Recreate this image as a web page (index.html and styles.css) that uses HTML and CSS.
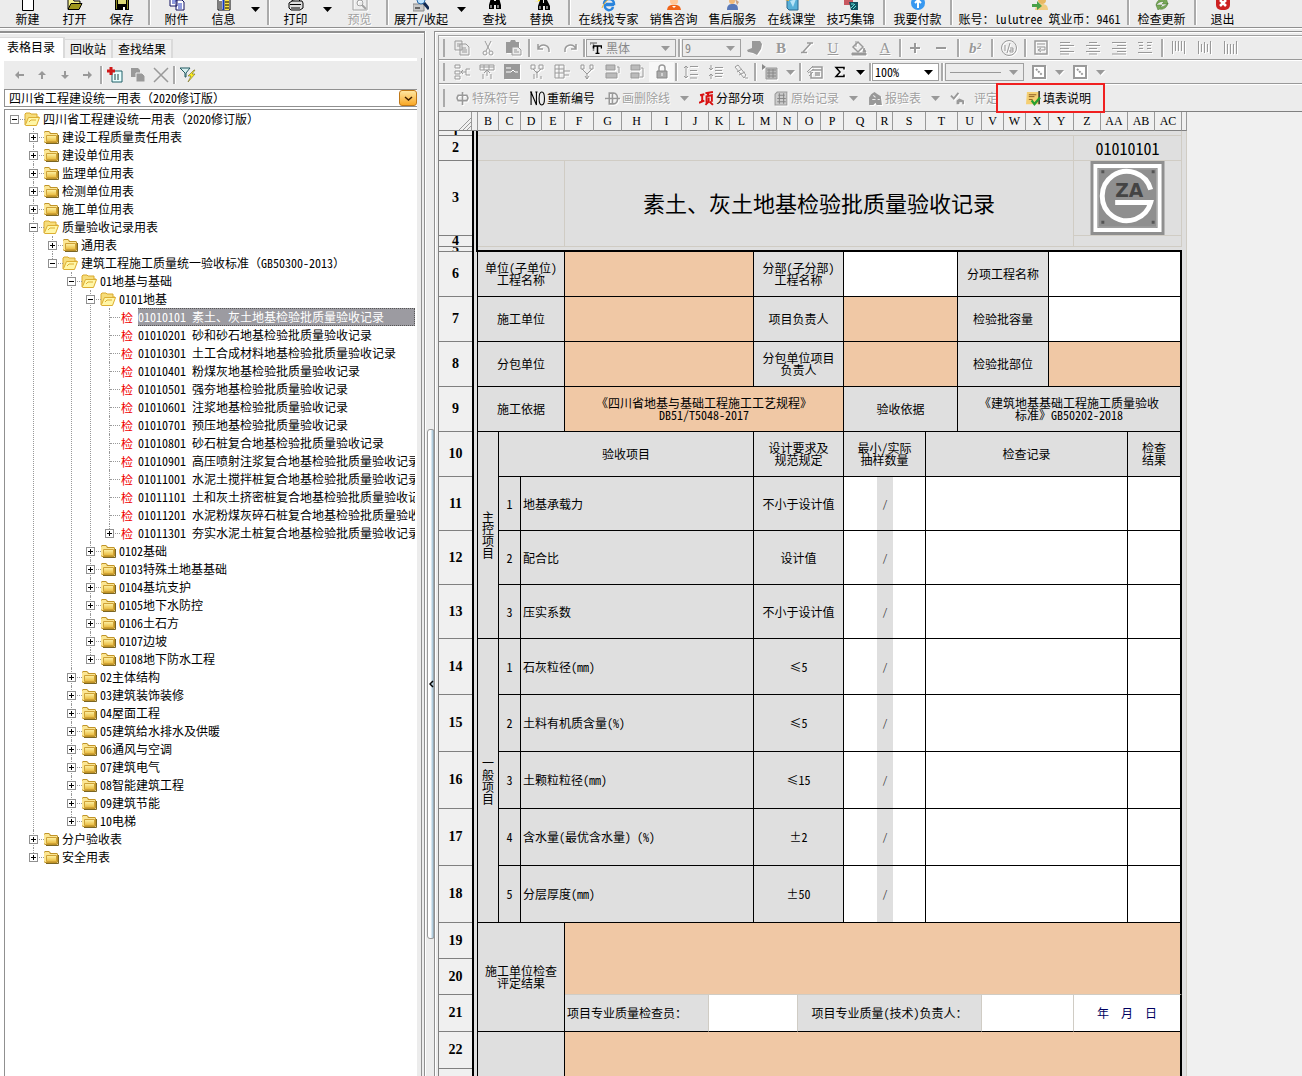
FILE: index.html
```html
<!DOCTYPE html>
<html lang="zh-CN">
<head>
<meta charset="utf-8">
<title>四川省工程建设统一用表</title>
<link rel="stylesheet" href="styles.css">
</head>
<body>
<svg class="defs" aria-hidden="true">
  <linearGradient id="gold" x1="0" y1="0" x2="0" y2="1"><stop offset="0" stop-color="#fff3a8"/><stop offset="1" stop-color="#e8b93a"/></linearGradient>
  <symbol id="closed" viewBox="0 0 16 16"><path d="M1 13V3l1-1h4l2 2h6l1 1v8l-1 1H2z" fill="#c09428"/><path d="M1 12V4l1-1h4l1 2h7v7l-1 1H2z" fill="#fbe694"/><path d="M3.500 6.500h10v6h-10z" fill="url(#gold)" stroke="#cfa236"/><path d="M3 14.500h12.500V6" fill="none" stroke="#7a6524"/></symbol>
  <symbol id="open" viewBox="0 0 16 16"><path d="M1 14V3l1-1h4l1 1h6v3h2l-3 8z" fill="#f6dd7c" stroke="#d9a92c"/><path d="M1.500 13.500l3-7h11l-3 8H2z" fill="#fff6a6" stroke="#dcae33"/><path d="M5 11l2-2h5" fill="none" stroke="#dcae33"/></symbol>
  <symbol id="tri" viewBox="0 0 9 5"><path d="M0 0h9L4.500 5z"/></symbol>
</svg>

<header class="main-bar">
  <button class="mb"><svg viewBox="0 0 16 16"><path d="M2.500 0v14.500h11V0z" fill="#fff" stroke="#000"/></svg>新建</button>
  <button class="mb"><svg viewBox="0 0 16 16"><path d="M1 13V3h5l1 2h6v2" fill="#f7f38e" stroke="#000"/><path d="M1 13.500l3-6h11l-3 6z" fill="#a0981c" stroke="#000"/></svg>打开</button>
  <button class="mb"><svg viewBox="0 0 16 16"><path d="M1 1h14v13H1z" fill="#000"/><path d="M2 2h1v11H2zM13 2h1v11h-1z" fill="#8a8620"/><path d="M4 2h8v6H4z" fill="#dcd978"/><path d="M9 11h2v3H9z" fill="#fff"/></svg>保存</button>
  <span class="sep"></span>
  <button class="mb"><svg viewBox="0 0 16 16"><path d="M1 0h7v10H1zM7 4h6l2 2v8H7z" fill="#fff" stroke="#101060"/><path d="M3 5h4M3 7h3M9 8h4M9 10h4M9 12h4" stroke="#2038c0"/></svg>附件</button>
  <button class="mb"><svg viewBox="0 0 16 16"><path d="M2 2h12v12H2z" fill="#fff" stroke="#000"/><path d="M8 2h5v12H8z" fill="#ffe640"/><path d="M3 6h3M3 8h3M3 10h3M3 12h3M9 6h4M9 9h4M9 12h4" stroke="#000"/><path d="M7.500 2v12" stroke="#1038c8" stroke-width="2"/></svg>信息</button>
  <button class="drop" aria-label="更多信息"><svg><use href="#tri"/></svg></button>
  <span class="sep"></span>
  <button class="mb"><svg viewBox="0 0 16 16"><path d="M4 5l2-5h7l-2 6z" fill="#fff" stroke="#000"/><path d="M1 7l3-2h10l1 2v5l-3 2H3l-2-2z" fill="#ddd" stroke="#000"/><path d="M2 8.500h11M3 12h9" stroke="#000"/></svg>打印</button>
  <button class="drop" aria-label="打印选项"><svg><use href="#tri"/></svg></button>
  <button class="mb off"><svg viewBox="0 0 16 16"><path d="M1 0v14h14V0" fill="none" stroke="#a0a0a0"/><circle cx="8" cy="7" r="3" fill="none" stroke="#a0a0a0"/><path d="M10 9l4 4" stroke="#a0a0a0" stroke-width="2"/></svg>预览</button>
  <span class="sep"></span>
  <button class="mb w60"><svg viewBox="0 0 16 16"><path d="M0 8h11v7H0z" fill="#c8c8c8" stroke="#888"/><path d="M2 12h5" stroke="#000"/><circle cx="8" cy="4" r="4" fill="#bfe4ff" stroke="#2868a8"/><path d="M11 7l5 6" stroke="#102850" stroke-width="3"/></svg>展开/收起</button>
  <button class="drop w20" aria-label="展开选项"><svg><use href="#tri"/></svg></button>
  <button class="mb"><svg viewBox="0 0 16 16"><path d="M4 2h3v3h2V2h3l2 7v4H9V9H7v4H2V9z" fill="#000"/><path d="M4 9v3M11 9v3" stroke="#fff"/></svg>查找</button>
  <button class="mb"><svg viewBox="0 0 16 16"><path d="M6 4h3v3h1V4h3l3 6v4h-5v-4h-2v4H4v-4z" fill="#000"/><path d="M0 6l4-1 1-4 1 4" fill="#ffe800"/><path d="M6 10v3M13 10v3" stroke="#fff"/></svg>替换</button>
  <span class="sep"></span>
  <button class="mb w71"><svg viewBox="0 0 16 16"><path d="M13 9H4a4 4 0 0 0 8 2M3 8a5 5 0 0 1 10 0H5" fill="none" stroke="#2a84dc" stroke-width="2.500"/><path d="M1 12C4 4 10 1 15 2" fill="none" stroke="#f2b632"/></svg>在线找专家</button>
  <button class="mb w59"><svg viewBox="0 0 16 16"><circle cx="8" cy="5" r="4" fill="#ffc89a"/><path d="M1 14c1-5 3-5 7-5s6 0 7 5z" fill="#f06418"/><path d="M6 10l2 2 2-2" fill="#fff"/></svg>销售咨询</button>
  <button class="mb w59"><svg viewBox="0 0 16 16"><circle cx="7" cy="5" r="3" fill="#f0b878"/><path d="M2 14c0-5 2-6 6-6s5 2 5 6z" fill="#5878b8"/><path d="M10 3l4 3-2 3z" fill="#c8a080"/></svg>售后服务</button>
  <button class="mb w59"><svg viewBox="0 0 16 16"><path d="M3 2l9-1 2 2v11H5l-2-2z" fill="#58b0d8" stroke="#286890"/><path d="M5 4v9M6 5l3 6 3-8" fill="#b8e4f8"/><path d="M1 4l4-2v3z" fill="#f0b030"/></svg>在线课堂</button>
  <button class="mb w59"><svg viewBox="0 0 16 16"><path d="M1 2h9v7H1z" fill="#c85860"/><path d="M6 6h9v8H8z" fill="#145060"/><path d="M8 12l4-4M10 13l3-3M8 8h3" stroke="#60e0d8"/></svg>技巧集锦</button>
  <span class="sep"></span>
  <button class="mb w59"><svg viewBox="0 0 16 16"><circle cx="8" cy="7" r="7" fill="#3898f0"/><path d="M8 12V4M5 7l3-3 3 3" fill="none" stroke="#fff" stroke-width="2"/></svg>我要付款</button>
  <span class="sep"></span>
  <div class="mb account"><svg viewBox="0 0 16 16"><circle cx="10" cy="4" r="4" fill="#e8b860"/><path d="M3 14c1-5 3-6 7-6s6 2 6 6z" fill="#f0cc80"/><path d="M0 8h5V5l5 5-5 4v-3H0z" fill="#48a048"/></svg><span>账号：lulutree 筑业币：9461</span></div>
  <span class="sep"></span>
  <button class="mb w59"><svg viewBox="0 0 16 16"><path d="M2 9c1-5 5-7 9-5l1-2 2 6-6 0 2-2c-3-1-5 0-8 3zM14 7c-1 5-5 7-9 6l-1 1-2-5h6l-2 2c3 0 5-1 8-4z" fill="#78a858" stroke="#487830" stroke-width=".5"/></svg>检查更新</button>
  <span class="sep"></span>
  <button class="mb"><svg viewBox="0 0 16 16"><rect x="1" width="14" height="14" rx="5" fill="#cc2020"/><path d="M5 4l6 6M11 4l-6 6" stroke="#fff" stroke-width="2.500"/></svg>退出</button>
</header>

<main class="work">
<aside class="side">
  <nav class="tabs">
    <button class="tab on">表格目录</button><button class="tab">回收站</button><button class="tab">查找结果</button>
  </nav>
  <div class="side-body">
    <div class="side-tools">
      <button aria-label="后退"><svg viewBox="0 0 16 16"><path d="M4 8l4-4v3h5v2H8v3z" fill="#999"/></svg></button>
      <button aria-label="上移"><svg viewBox="0 0 16 16"><path d="M8 4l4 4H9v4H7V8H4z" fill="#999"/></svg></button>
      <button aria-label="下移"><svg viewBox="0 0 16 16"><path d="M8 12l4-4H9V4H7v4H4z" fill="#999"/></svg></button>
      <button aria-label="前进"><svg viewBox="0 0 16 16"><path d="M12 8L8 4v3H3v2h5v3z" fill="#999"/></svg></button>
      <span class="sep thin"></span>
      <button aria-label="添加"><svg viewBox="0 0 16 16"><path d="M5 4h10v11H5z" fill="#e8ffff" stroke="#206068"/><path d="M7 8h6M7 10h6M7 12h6" stroke="#204040" stroke-dasharray="2 1"/><path d="M4 0v8M0 4h8" stroke="#d01818" stroke-width="3"/></svg></button>
      <button aria-label="复制"><svg viewBox="0 0 16 16"><path d="M1 1h7l2 2v7H1z" fill="#999"/><path d="M6 6h6l3 3v6H6z" fill="#999" stroke="#ececec"/></svg></button>
      <button aria-label="删除"><svg viewBox="0 0 16 16"><path d="M1 1l14 14M15 1L1 15" stroke="#999" stroke-width="1.500"/></svg></button>
      <span class="sep thin"></span>
      <button aria-label="筛选"><svg viewBox="0 0 16 16"><path d="M0 1h10L6 6v4H5V6z" fill="#d8f0f0" stroke="#205860"/><path d="M14 3l-6 6h3l-3 6 7-8h-3l3-4z" fill="#fff020" stroke="#706820" stroke-width=".6"/></svg></button>
    </div>
    <div class="combo">
      <select aria-label="模板"><option>四川省工程建设统一用表（2020修订版）</option></select>
      <button aria-label="展开列表"><svg viewBox="0 0 9 5"><path d="M1 1l3.500 3L8 1" fill="none" stroke="#402000" stroke-width="1.500"/></svg></button>
    </div>
    <ul class="tree">
      <li><div class="row"><button class="ex"></button><svg><use href="#open"/></svg><span>四川省工程建设统一用表（2020修订版）</span></div>
      <ul>
        <li><div class="row"><button class="ex plus"></button><svg><use href="#closed"/></svg><span>建设工程质量责任用表</span></div></li>
        <li><div class="row"><button class="ex plus"></button><svg><use href="#closed"/></svg><span>建设单位用表</span></div></li>
        <li><div class="row"><button class="ex plus"></button><svg><use href="#closed"/></svg><span>监理单位用表</span></div></li>
        <li><div class="row"><button class="ex plus"></button><svg><use href="#closed"/></svg><span>检测单位用表</span></div></li>
        <li><div class="row"><button class="ex plus"></button><svg><use href="#closed"/></svg><span>施工单位用表</span></div></li>
        <li><div class="row"><button class="ex"></button><svg><use href="#open"/></svg><span>质量验收记录用表</span></div>
        <ul>
          <li><div class="row"><button class="ex plus"></button><svg><use href="#closed"/></svg><span>通用表</span></div></li>
          <li><div class="row"><button class="ex"></button><svg><use href="#open"/></svg><span>建筑工程施工质量统一验收标准（GB50300-2013）</span></div>
          <ul>
            <li><div class="row"><button class="ex"></button><svg><use href="#open"/></svg><span>01地基与基础</span></div>
            <ul>
              <li><div class="row"><button class="ex"></button><svg><use href="#open"/></svg><span>0101地基</span></div>
              <ul>
                <li><div class="row sel"><i></i><b>检</b><span>01010101 素土、灰土地基检验批质量验收记录</span></div></li>
                <li><div class="row"><i></i><b>检</b><span>01010201 砂和砂石地基检验批质量验收记录</span></div></li>
                <li><div class="row"><i></i><b>检</b><span>01010301 土工合成材料地基检验批质量验收记录</span></div></li>
                <li><div class="row"><i></i><b>检</b><span>01010401 粉煤灰地基检验批质量验收记录</span></div></li>
                <li><div class="row"><i></i><b>检</b><span>01010501 强夯地基检验批质量验收记录</span></div></li>
                <li><div class="row"><i></i><b>检</b><span>01010601 注浆地基检验批质量验收记录</span></div></li>
                <li><div class="row"><i></i><b>检</b><span>01010701 预压地基检验批质量验收记录</span></div></li>
                <li><div class="row"><i></i><b>检</b><span>01010801 砂石桩复合地基检验批质量验收记录</span></div></li>
                <li><div class="row"><i></i><b>检</b><span>01010901 高压喷射注浆复合地基检验批质量验收记录</span></div></li>
                <li><div class="row"><i></i><b>检</b><span>01011001 水泥土搅拌桩复合地基检验批质量验收记录</span></div></li>
                <li><div class="row"><i></i><b>检</b><span>01011101 土和灰土挤密桩复合地基检验批质量验收记录</span></div></li>
                <li><div class="row"><i></i><b>检</b><span>01011201 水泥粉煤灰碎石桩复合地基检验批质量验收记录</span></div></li>
                <li><div class="row"><button class="ex plus"></button><b>检</b><span>01011301 夯实水泥土桩复合地基检验批质量验收记录</span></div></li>
              </ul></li>
              <li><div class="row"><button class="ex plus"></button><svg><use href="#closed"/></svg><span>0102基础</span></div></li>
              <li><div class="row"><button class="ex plus"></button><svg><use href="#closed"/></svg><span>0103特殊土地基基础</span></div></li>
              <li><div class="row"><button class="ex plus"></button><svg><use href="#closed"/></svg><span>0104基坑支护</span></div></li>
              <li><div class="row"><button class="ex plus"></button><svg><use href="#closed"/></svg><span>0105地下水防控</span></div></li>
              <li><div class="row"><button class="ex plus"></button><svg><use href="#closed"/></svg><span>0106土石方</span></div></li>
              <li><div class="row"><button class="ex plus"></button><svg><use href="#closed"/></svg><span>0107边坡</span></div></li>
              <li><div class="row"><button class="ex plus"></button><svg><use href="#closed"/></svg><span>0108地下防水工程</span></div></li>
            </ul></li>
            <li><div class="row"><button class="ex plus"></button><svg><use href="#closed"/></svg><span>02主体结构</span></div></li>
            <li><div class="row"><button class="ex plus"></button><svg><use href="#closed"/></svg><span>03建筑装饰装修</span></div></li>
            <li><div class="row"><button class="ex plus"></button><svg><use href="#closed"/></svg><span>04屋面工程</span></div></li>
            <li><div class="row"><button class="ex plus"></button><svg><use href="#closed"/></svg><span>05建筑给水排水及供暖</span></div></li>
            <li><div class="row"><button class="ex plus"></button><svg><use href="#closed"/></svg><span>06通风与空调</span></div></li>
            <li><div class="row"><button class="ex plus"></button><svg><use href="#closed"/></svg><span>07建筑电气</span></div></li>
            <li><div class="row"><button class="ex plus"></button><svg><use href="#closed"/></svg><span>08智能建筑工程</span></div></li>
            <li><div class="row"><button class="ex plus"></button><svg><use href="#closed"/></svg><span>09建筑节能</span></div></li>
            <li><div class="row"><button class="ex plus"></button><svg><use href="#closed"/></svg><span>10电梯</span></div></li>
          </ul></li>
        </ul></li>
        <li><div class="row"><button class="ex plus"></button><svg><use href="#closed"/></svg><span>分户验收表</span></div></li>
        <li><div class="row"><button class="ex plus"></button><svg><use href="#closed"/></svg><span>安全用表</span></div></li>
      </ul></li>
    </ul>
  </div>
</aside>

<div class="splitter"><button aria-label="收起目录"><svg viewBox="0 0 5 8"><path d="M4 1L1 4l3 3" fill="none" stroke="#000" stroke-width="1.500"/></svg></button></div>

<section class="editor">
  <div class="bars">
    <div class="bar r1">
      <span class="grip"></span>
      <button><svg viewBox="0 0 16 16"><path d="M1 1h7v9H1zM6 4h6l3 3v8H6z" fill="#ececec" stroke="#999"/><path d="M3 4h3M3 6h3M8 8h4M8 10h5M8 12h5" stroke="#999"/></svg></button>
      <button><svg viewBox="0 0 16 16"><path d="M5 1l5 10M11 1L6 11" stroke="#999" fill="none"/><circle cx="5" cy="13" r="2" fill="none" stroke="#999"/><circle cx="11" cy="13" r="2" fill="none" stroke="#999"/></svg></button>
      <button><svg viewBox="0 0 16 16"><path d="M0 2h4l1-2h4l1 2h3v11H0z" fill="#999"/><path d="M6 7h6l3 3v5H6z" fill="#ececec" stroke="#999"/><path d="M8 10h3M8 12h5" stroke="#999"/></svg></button>
      <span class="sep s4"></span>
      <button><svg viewBox="0 0 16 16"><path d="M2 4v5h5M2 9c3-6 12-5 11 3" fill="none" stroke="#999" stroke-width="1.500"/></svg></button>
      <button><svg viewBox="0 0 16 16"><path d="M14 4v5H9M14 9C11 3 2 4 3 12" fill="none" stroke="#999" stroke-width="1.500"/></svg></button>
      <span class="sep s3"></span>
      <label class="field font"><svg class="tt" viewBox="0 0 12 12"><path d="M0 1h7M3.500 1v8M0 1v2" stroke="#888" stroke-width="1.500" fill="none"/><path d="M3 4h9M7.500 4v8M5.500 11.500h4M3.500 4v2.500M11.500 4v2.500" stroke="#000" stroke-width="1.500" fill="none"/></svg><select aria-label="字体"><option>黑体</option></select><svg><use href="#tri"/></svg></label>
      <span class="sep s6"></span>
      <label class="field size"><select aria-label="字号"><option>9</option></select><svg><use href="#tri"/></svg></label>
      <button><svg viewBox="0 0 16 16"><path d="M5 1h8l2 3-1 5-4 6-4-2-5-1-1-2 5-2z" fill="#999"/></svg></button>
      <button class="gl"><b>B</b></button>
      <button><svg viewBox="0 0 16 16"><path d="M8 3h6M12 3L4 12M2 12.500h6" stroke="#999" stroke-width="1.500"/></svg></button>
      <button class="gl"><u>U</u></button>
      <button><svg viewBox="0 0 16 16"><path d="M2 7l5-5 5 5-5 5z" fill="none" stroke="#999" stroke-width="1.500"/><path d="M5 1v6M13 8l2 4h-3zM1 13h14v2H1z" fill="#999" stroke="#999"/></svg></button>
      <button class="gl"><u>A</u></button>
      <span class="sep s4"></span>
      <button><svg viewBox="0 0 16 16"><path d="M8 3v10M3 8h10" stroke="#999" stroke-width="2"/></svg></button>
      <button><svg viewBox="0 0 16 16"><path d="M3 8h10" stroke="#999" stroke-width="2"/></svg></button>
      <span class="sep s8"></span>
      <button class="gl"><b><em>b²</em></b></button>
      <span class="sep s8"></span>
      <button><svg viewBox="0 0 16 16"><circle cx="8" cy="8" r="7.500" fill="none" stroke="#999"/><path d="M4 5v6M9 3L6 13M9 8h3v4H9v-2h3" fill="none" stroke="#999"/></svg></button>
      <span class="sep s6"></span>
      <button><svg viewBox="0 0 16 16"><path d="M2 1h12v13H2z" fill="none" stroke="#999" stroke-width="1.500"/><path d="M4 4h8M4 7h8v3H6M8 8l-3 2 3 2" fill="none" stroke="#999"/></svg></button>
      <button><svg viewBox="0 0 16 16"><path d="M1 2.500h10M1 5.500h14M1 8.500h9M1 11.500h14M1 14h9" stroke="#999"/></svg></button>
      <button><svg viewBox="0 0 16 16"><path d="M4 2.500h8M1 5.500h14M4 8.500h8M1 11.500h14M4 14h8" stroke="#999"/></svg></button>
      <button><svg viewBox="0 0 16 16"><path d="M1 2.500h14M6 5.500h9M1 8.500h14M6 11.500h9M1 14h14" stroke="#999"/></svg></button>
      <button><svg viewBox="0 0 16 16"><path d="M1 2.500h5M10 2.500h5M2 5.500h4M10 5.500h4M2 8.500h4M10 8.500h4M1 12.500h14" stroke="#999"/></svg></button>
      <span class="sep s8"></span>
      <button><svg viewBox="0 0 16 16"><path d="M1.500 1v13M4.500 1v10M7.500 1v10M10.500 1v10M13.500 1v13" stroke="#999"/></svg></button>
      <button><svg viewBox="0 0 16 16"><path d="M1.500 1v13M4.500 4v8M7.500 2v11M10.500 4v8M13.500 1v13" stroke="#999"/></svg></button>
      <button><svg viewBox="0 0 16 16"><path d="M1.500 1v13M4.500 4v10M7.500 4v10M10.500 4v10M13.500 1v13" stroke="#999"/></svg></button>
    </div>
    <div class="bar r2">
      <span class="grip"></span>
      <button><svg viewBox="0 0 16 16"><path d="M1 1h5v3H1zM1 7h5v3H1zM1 12h5v3H1zM16 5h-4v6h4M12 8H7M9 6L7 8l2 2" fill="none" stroke="#999"/></svg></button>
      <button><svg viewBox="0 0 16 16"><path d="M1 1h14v5H1zM5 1v5M10 1v5M1 3h14M8 6v6M5 9l3-3 3 3M4 10v5M12 10v5" fill="none" stroke="#999"/></svg></button>
      <button><svg viewBox="0 0 16 16"><path d="M0 0h16v15H0z" fill="#999"/><path d="M2 4h5M2 8h5l2-2 2 2h3" fill="none" stroke="#fff"/></svg></button>
      <button><svg viewBox="0 0 16 16"><path d="M2 1h4v4H2zM10 1h4v4h-4zM4 5l4 4 4-4M8 7v7M5 10v5M12 12v3" fill="none" stroke="#999"/></svg></button>
      <button><svg viewBox="0 0 16 16"><path d="M1 1h9v13H1zM1 5h9M1 9h9M5 1v13M9 7h7M10 11h5" fill="none" stroke="#999"/></svg></button>
      <button><svg viewBox="0 0 16 16"><path d="M2 1h3v4H2zM11 1h3v4h-3zM3 5l5 5 5-5M8 9v6M6 12l2 3 2-3" fill="none" stroke="#999"/></svg></button>
      <button><svg viewBox="0 0 16 16"><path d="M2 1h9v5H2zM2 9h11v5H2z" fill="#bbb" stroke="#999"/><path d="M13 3h2v6" fill="none" stroke="#999"/></svg></button>
      <button><svg viewBox="0 0 16 16"><path d="M2 1h9v5H2zM2 9h8v5H2z" fill="#bbb" stroke="#999"/><path d="M12 4h2v9h-3" fill="none" stroke="#999"/></svg></button>
      <button class="held"><svg viewBox="0 0 16 16"><path d="M5 8V4a3 3 0 0 1 6 0v4" fill="none" stroke="#999" stroke-width="1.500"/><path d="M3 7h10v7H3z" fill="#aaa" stroke="#888"/><path d="M8 9v3" stroke="#fff"/></svg></button>
      <span class="sep s4"></span>
      <button><svg viewBox="0 0 16 16"><path d="M3 2v12M1 4l2-2 2 2M1 12l2 2 2-2M7 2.500h8M7 6.500h7M7 10.500h8M7 14h7" fill="none" stroke="#999"/></svg></button>
      <button><svg viewBox="0 0 16 16"><path d="M3 1v5M1 4l2 2 2-2M3 15v-5M1 12l2-2 2 2M7 3.500h8M7 6.500h7M7 9.500h8M7 12.500h7" fill="none" stroke="#999"/></svg></button>
      <button><svg viewBox="0 0 16 16"><path d="M2 3l3-2 8 10-2 3zM4 8l5-3M6 11l6-3M12 14h3" fill="none" stroke="#999"/></svg></button>
      <span class="sep s4"></span>
      <button><svg viewBox="0 0 16 16"><path d="M0 0l4 3-4 3z" fill="#888"/><path d="M4 4h11v11H4z" fill="#bbb" stroke="#999"/><path d="M5 6h9M5 9h9M5 12h9M7 5v9M11 5v9" stroke="#888"/></svg></button>
      <button class="ar"><svg class="t"><use href="#tri"/></svg></button>
      <span class="sep s4"></span>
      <button><svg viewBox="0 0 16 16"><path d="M5 3h10v11H4V8M5 6h10M8 9h5M8 11h5" fill="none" stroke="#999" stroke-width="1.500"/><path d="M0 8l6-6M1 9l6-4M2 12l4-4" stroke="#999"/></svg></button>
      <button><svg viewBox="0 0 16 16"><path d="M12 5.500V3.500H4l4 4.500-4 4.500h8v-2" fill="none" stroke="#000" stroke-width="1.500"/></svg></button>
      <button class="ar blk"><svg class="t"><use href="#tri"/></svg></button>
      <span class="sep s4"></span>
      <label class="field zoom"><select aria-label="缩放"><option>100%</option></select><svg><use href="#tri"/></svg></label>
      <span class="sep s6"></span>
      <label class="field line"><i></i><svg><use href="#tri"/></svg></label>
      <button><svg viewBox="0 0 16 16"><path d="M2 2h12v12H2z" fill="#fff" stroke="#999" stroke-width="2"/><path d="M5 5l6 6" stroke="#999" stroke-width="2" stroke-dasharray="2 1"/></svg></button>
      <button class="ar"><svg class="t"><use href="#tri"/></svg></button>
      <button><svg viewBox="0 0 16 16"><path d="M2 2h12v12H2z" fill="#fff" stroke="#999" stroke-width="2"/><path d="M5 5l6 6" stroke="#999" stroke-width="2" stroke-dasharray="2 1"/></svg></button>
      <button class="ar"><svg class="t"><use href="#tri"/></svg></button>
    </div>
    <div class="bar r3">
      <span class="grip"></span>
      <button class="lbl off"><svg viewBox="0 0 14 14"><path d="M7 1v12M3 4h8l1 2v1l-1 2H3L2 7V6z" fill="none" stroke="#999" stroke-width="1.500"/></svg>特殊符号</button>
      <button class="lbl"><svg viewBox="0 0 14 14"><path d="M1 13V1l5 12V1M0 1h2M5 1h2" fill="none" stroke="#000"/><ellipse cx="11" cy="7" rx="2.500" ry="6" fill="none" stroke="#000"/></svg>重新编号</button>
      <button class="lbl off"><svg viewBox="0 0 14 14"><path d="M4 2h4c5 0 5 10 0 10H4zM7 2v10M0 7h14" fill="none" stroke="#999" stroke-width="1.500"/></svg>画删除线</button>
      <button class="ar d3"><svg class="t"><use href="#tri"/></svg></button>
      <button class="lbl"><svg viewBox="0 0 14 14"><path d="M1 4l4-1M3 3v7M0 11l5-2M6 2l7-1M9 2L8 4M7 11V5l5-1v6M9 6v4l-3 3M10 10l3 3" fill="none" stroke="#d81010" stroke-width="1.800"/></svg>分部分项</button>
      <button class="lbl off"><svg viewBox="0 0 14 14"><path d="M3 1h9v12H1V3z" fill="#ccc" stroke="#999"/><path d="M4 4h6M3 7h8M3 10h8M5 2v10M9 2v10" stroke="#888"/></svg>原始记录</button>
      <button class="ar d3"><svg class="t"><use href="#tri"/></svg></button>
      <button class="lbl off"><svg viewBox="0 0 14 14"><path d="M1 6l2-3 3-2 3 2 3 2 1 8H8l-1-2-2 2H1z" fill="#999"/><path d="M5 4l2 2M4 8h3M9 8h2" stroke="#ececec"/></svg>报验表</button>
      <button class="ar d3"><svg class="t"><use href="#tri"/></svg></button>
      <button class="lbl off cut"><svg viewBox="0 0 16 14"><path d="M1 4l3 3 5-6" fill="none" stroke="#999" stroke-width="2"/><path d="M7 9l3-2 5 2v4h-2v-2h-3v2H7z" fill="#999"/></svg>评定</button>
      <button class="lbl mark"><svg viewBox="0 0 16 16"><path d="M1 1h13v13H0z" fill="#f5cf72"/><path d="M14 0v14" stroke="#222" stroke-width="1.500"/><path d="M3 4h8M3 6h6M3 9h4" stroke="#8a5a20"/><path d="M6 10l3 4 6-7" fill="none" stroke="#28a030" stroke-width="2.500"/></svg>填表说明</button>
    </div>
  </div>
  <div class="sheet-area">
  <table class="sheet">
    <colgroup>
      <col class="w33"><col class="w6"><col class="w21"><col class="w22"><col class="w21"><col class="w23"><col class="w29"><col class="w28"><col class="w30"><col class="w30"><col class="w27"><col class="w21"><col class="w24"><col class="w23"><col class="w21"><col class="w23"><col class="w23"><col class="w33"><col class="w16"><col class="w33"><col class="w32"><col class="w24"><col class="w22"><col class="w22"><col class="w23"><col class="w25"><col class="w27"><col class="w27"><col class="w27"><col class="w27"><col class="w5">
    </colgroup>
    <thead><tr>
      <th class="corner"><svg viewBox="0 0 12 12"><path d="M0 12L12 0M4 12l8-8M8 12l4-4" stroke="#999"/></svg></th><th></th><th>B</th><th>C</th><th>D</th><th>E</th><th>F</th><th>G</th><th>H</th><th>I</th><th>J</th><th>K</th><th>L</th><th>M</th><th>N</th><th>O</th><th>P</th><th>Q</th><th>R</th><th>S</th><th>T</th><th>U</th><th>V</th><th>W</th><th>X</th><th>Y</th><th>Z</th><th>AA</th><th>AB</th><th>AC</th><th></th>
    </tr></thead>
    <tbody>
    <tr class="h5"><th><div class="clip c4">1</div></th><td class="a top" rowspan="5"></td><td class="p" colspan="28"></td><td class="tail" rowspan="23"></td></tr>
    <tr class="h25"><th>2</th><td class="p" colspan="24"></td><td class="p code" colspan="4">01010101</td></tr>
    <tr class="h75"><th>3</th><td class="p" colspan="4" rowspan="2"></td><td class="p title" colspan="20" rowspan="2">素土、灰土地基检验批质量验收记录</td>
      <td class="p" colspan="4"><svg class="logo" viewBox="0 0 75 75"><path d="M0 0h75v75H0z" fill="#8f8f8f"/><path d="M5 5h65v65H5z" fill="none" stroke="#fff" stroke-width="4"/><path d="M8 8h59v59H8z" fill="none" stroke="#aaa"/><path d="M61 29A25 25 0 1 0 61 42H25" fill="none" stroke="#fff" stroke-width="5"/><path d="M11 11h3M62 11h3M11 62h3M62 62h3" stroke="#555" stroke-width="3"/><text x="25" y="36" class="za">ZA</text></svg></td></tr>
    <tr class="h11"><th><div class="clip c10">4</div></th><td class="p" colspan="4"></td></tr>
    <tr class="h5"><th><div class="clip c4">5</div></th><td class="thick" colspan="28"></td></tr>
    <tr class="h45"><th>6</th><td class="a" rowspan="18"></td><td colspan="4">单位(子单位)<br>工程名称</td><td class="o" colspan="7"></td><td colspan="4">分部(子分部)<br>工程名称</td><td class="w" colspan="4"></td><td colspan="4">分项工程名称</td><td class="w e" colspan="5"></td></tr>
    <tr class="h45"><th>7</th><td colspan="4">施工单位</td><td class="o" colspan="7"></td><td colspan="4">项目负责人</td><td class="o" colspan="4"></td><td colspan="4">检验批容量</td><td class="w e" colspan="5"></td></tr>
    <tr class="h45"><th>8</th><td colspan="4">分包单位</td><td class="o" colspan="7"></td><td colspan="4">分包单位项目<br>负责人</td><td class="o" colspan="4"></td><td colspan="4">检验批部位</td><td class="o e" colspan="5"></td></tr>
    <tr class="h45"><th>9</th><td colspan="4">施工依据</td><td class="o" colspan="11">《四川省地基与基础工程施工工艺规程》<br>DB51/T5048-2017</td><td colspan="4">验收依据</td><td class="e" colspan="9">《建筑地基基础工程施工质量验收<br>标准》GB50202-2018</td></tr>
    <tr class="h45"><th>10</th><td rowspan="4"><div class="vert">主控项目</div></td><td colspan="10">验收项目</td><td colspan="4">设计要求及<br>规范规定</td><td colspan="3">最小/实际<br>抽样数量</td><td colspan="8">检查记录</td><td class="e" colspan="2">检查<br>结果</td></tr>
    <tr class="h54"><th>11</th><td>1</td><td class="l" colspan="9">地基承载力</td><td colspan="4">不小于设计值</td><td class="w n"></td><td class="n">/</td><td class="w"></td><td class="w" colspan="8"></td><td class="w e" colspan="2"></td></tr>
    <tr class="h54"><th>12</th><td>2</td><td class="l" colspan="9">配合比</td><td colspan="4">设计值</td><td class="w n"></td><td class="n">/</td><td class="w"></td><td class="w" colspan="8"></td><td class="w e" colspan="2"></td></tr>
    <tr class="h54"><th>13</th><td>3</td><td class="l" colspan="9">压实系数</td><td colspan="4">不小于设计值</td><td class="w n"></td><td class="n">/</td><td class="w"></td><td class="w" colspan="8"></td><td class="w e" colspan="2"></td></tr>
    <tr class="h56"><th>14</th><td rowspan="5"><div class="vert">一般项目</div></td><td>1</td><td class="l" colspan="9">石灰粒径(mm)</td><td colspan="4">≤5</td><td class="w n"></td><td class="n">/</td><td class="w"></td><td class="w" colspan="8"></td><td class="w e" colspan="2"></td></tr>
    <tr class="h57"><th>15</th><td>2</td><td class="l" colspan="9">土料有机质含量(%)</td><td colspan="4">≤5</td><td class="w n"></td><td class="n">/</td><td class="w"></td><td class="w" colspan="8"></td><td class="w e" colspan="2"></td></tr>
    <tr class="h57"><th>16</th><td>3</td><td class="l" colspan="9">土颗粒粒径(mm)</td><td colspan="4">≤15</td><td class="w n"></td><td class="n">/</td><td class="w"></td><td class="w" colspan="8"></td><td class="w e" colspan="2"></td></tr>
    <tr class="h57"><th>17</th><td>4</td><td class="l" colspan="9">含水量(最优含水量) (%)</td><td colspan="4">±2</td><td class="w n"></td><td class="n">/</td><td class="w"></td><td class="w" colspan="8"></td><td class="w e" colspan="2"></td></tr>
    <tr class="h57"><th>18</th><td>5</td><td class="l" colspan="9">分层厚度(mm)</td><td colspan="4">±50</td><td class="w n"></td><td class="n">/</td><td class="w"></td><td class="w" colspan="8"></td><td class="w e" colspan="2"></td></tr>
    <tr class="h36"><th>19</th><td colspan="4" rowspan="3">施工单位检查<br>评定结果</td><td class="o e soft" colspan="24" rowspan="2"></td></tr>
    <tr class="h36"><th>20</th></tr>
    <tr class="h37"><th>21</th><td class="l g" colspan="5">项目专业质量检查员：</td><td class="w g" colspan="4"></td><td class="g" colspan="7">项目专业质量(技术)负责人：</td><td class="w g" colspan="4"></td><td class="w e date" colspan="4">年&#12288;月&#12288;日</td></tr>
    <tr class="h37"><th>22</th><td colspan="4" rowspan="2"></td><td class="o e" colspan="24" rowspan="2"></td></tr>
    <tr class="h37"><th></th></tr>
    </tbody>
  </table>
  </div>
</section>
</main>
</body>
</html>
```
FILE: styles.css
```css
* { box-sizing: border-box; }
body {
  margin: 0; height: 100vh; overflow: hidden;
  display: flex; flex-direction: column;
  background: #ececec; color: #000;
  font: 12px/14px "Noto Sans Mono CJK SC", "Noto Sans CJK SC", sans-serif;
}
button { border: 0; padding: 0; background: none; color: inherit; font: inherit; white-space: nowrap; }
svg { display: block; flex: none; }
.defs { position: absolute; width: 0; height: 0; }

/* main command bar */
.main-bar {
  flex: none; height: 28px; padding: 0 4px; display: flex; overflow: hidden;
  border-bottom: 1px solid #909090;
}
.mb { width: 47px; flex: none; height: 27px; display: flex; flex-direction: column; align-items: center; justify-content: flex-end; padding-bottom: 1px; white-space: nowrap; }
.mb svg { width: 16px; height: 16px; }
.w59 { width: 59px; }
.w60 { width: 60px; }
.w71 { width: 71px; }
.account { width: 169px; }
.off { color: #a0a0a0; text-shadow: 1px 1px 0 #fff; }
.drop { width: 17px; flex: none; display: flex; justify-content: center; padding-top: 7px; }
.drop svg { width: 9px; height: 5px; }
.drop.w20 { width: 20px; }
.sep { flex: none; width: 8px; height: 25px; display: flex; justify-content: center; }
.sep::before { content: ""; width: 2px; background: #aaa; border-right: 1px solid #fff; }
.s3 { width: 3px; }
.s4, .thin { width: 4px; }
.s6 { width: 6px; }

.work { flex: 1; min-height: 0; display: flex; padding-top: 2px; border-top: 1px solid #fff; }

/* catalogue pane */
.side { flex: none; width: 425px; border-top: 2px solid #909090; border-right: 1px solid #909090; display: flex; flex-direction: column; padding: 4px 3px 0 0; box-shadow: inset 0 1px 0 #fff; }
.tabs { display: flex; align-items: flex-end; height: 21px; flex: none; }
.tab { height: 19px; padding: 0 5px; background: #f0f0f0; border-right: 2px solid #dadada; border-top: 1px solid #dadada; }
.tab.on { height: 21px; background: #fff; padding: 0 8px 2px 7px; }
.side-body { flex: 1; min-height: 0; background: #fff; display: flex; flex-direction: column; padding: 3px 0 0 4px; border-right: 4px solid #ececec; box-shadow: 1px 0 0 #909090; }
.side-tools { flex: none; height: 28px; display: flex; align-items: center; background: #ececec; padding-left: 3px; }
.side-tools button { width: 23px; display: flex; justify-content: center; }
.side-tools svg { width: 16px; height: 16px; }
.side-tools .sep { height: 18px; }
.combo { flex: none; height: 18px; display: flex; border: 1px solid #909090; border-right: 0; background: #fff; margin-bottom: 2px; }
.combo select { flex: 1; min-width: 0; appearance: none; border: 0; padding: 0 4px; background: #fff; font: inherit; color: #000; }
.combo button { width: 18px; display: flex; align-items: center; justify-content: center; border: 1px solid #c07818; border-radius: 3px; background: linear-gradient(#ffe6a0, #f9a826); }
.combo button svg { width: 9px; height: 5px; }
.tree { flex: 1; min-height: 0; overflow: hidden; border: 1px solid #909090; border-width: 1px 0 0 1px; }
.tree, .tree ul { margin: 0; padding: 0; list-style: none; }
.tree ul { margin-left: 19px; }
.tree li { position: relative; }
.tree ul > li::before { content: ""; position: absolute; left: 9px; top: 0; bottom: 0; border-left: 1px dotted #999; }
.tree ul > li:last-child::before { bottom: auto; height: 9px; }
.row { position: relative; display: flex; align-items: center; height: 18px; padding-left: 5px; margin-right: 2px; white-space: nowrap; overflow: hidden; }
.row::before { content: ""; position: absolute; left: 10px; width: 10px; top: 9px; border-top: 1px dotted #999; }
.ex, .row i { position: relative; flex: none; width: 9px; height: 9px; margin-right: 5px; }
.ex { border: 1px solid #909090; background: linear-gradient(#000, #000) center / 5px 1px no-repeat #fff; }
.ex.plus { background: linear-gradient(#000, #000) center / 5px 1px no-repeat, linear-gradient(#000, #000) center / 1px 5px no-repeat, #fff; }
.row svg { width: 16px; height: 16px; margin-right: 3px; }
.row b { width: 16px; flex: none; margin-right: 3px; color: #f00000; font-weight: 400; text-align: center; padding-top: 2px; }
.row span { line-height: 16px; border: 1px solid transparent; border-left: 0; }
.sel span { flex: 1; background: #9c9ba1; color: #fff; border-color: #555; border-style: dotted; }

.splitter { flex: none; width: 9px; padding: 398px 0 0 1px; border-left: 1px solid #fff; }
.splitter button { width: 8px; height: 510px; display: flex; align-items: center; justify-content: center; border: 1px solid #999; border-radius: 3px; background: linear-gradient(90deg, #fff 40%, #a8c8dc 80%, #909090); }
.splitter svg { width: 5px; height: 8px; }

/* editor pane */
.editor { flex: 1; min-width: 0; display: flex; flex-direction: column; border: 1px solid #909090; border-width: 1px 0 0 1px; padding: 3px 0 0 3px; box-shadow: inset 1px 1px 0 #fff; }
.bars { flex: none; border: 1px solid #a0a0a0; border-width: 1px 0 0 1px; }
.bar { display: flex; align-items: center; overflow: hidden; height: 24px; border-bottom: 1px solid #999; border-top: 1px solid #fff; }
.bar > * { flex: none; }
.bar .sep { height: 18px; }
.bar.r3 { height: 27px; overflow: visible; border-bottom: 0; }
.grip { width: 6px; height: 18px; border-right: 2px solid #aaa; margin-right: 4px; }
.bar button { display: flex; align-items: center; justify-content: center; }
.r1 > button { width: 26px; height: 20px; }
.r2 > button { width: 25px; height: 20px; }
.r1 > button svg, .r2 > button svg, .off svg { filter: drop-shadow(1px 1px 0 #fff); }
.r1 > button svg, .r2 > button svg { width: 16px; height: 16px; }
.gl { color: #999; font: 15px/16px "Liberation Serif", serif; text-shadow: 1px 1px 0 #fff; }
.held { background: #f7f7f7; }
.bar button.ar { width: 16px; color: #999; }
.bar button .t { width: 9px; height: 5px; fill: #999; }
.bar button.blk .t { fill: #000; }
.field { height: 18px; display: flex; align-items: center; border: 1px solid #a0a0a0; color: #888; padding: 0 5px 0 2px; }
.field select { flex: 1; min-width: 0; width: 20px; appearance: none; border: 0; padding: 0; background: none; color: inherit; font: inherit; }
.field svg { width: 9px; height: 5px; fill: #999; }
.field .tt { width: 12px; height: 12px; margin: 0 4px 0 1px; }
.font { width: 90px; }
.size { width: 59px; margin-right: 1px; }
.zoom { width: 67px; background: #fff; color: #000; }
.zoom svg { fill: #000; }
.line { width: 79px; margin-right: 2px; }
.line i { flex: 1; height: 1px; background: #999; margin: 0 8px 0 2px; }
.r3 .grip { margin-right: 10px; }
.lbl { gap: 2px; margin-right: 10px; }
.lbl svg { width: 15px; height: 15px; }
.bar button.d3 { width: 18px; margin: 0 6px 0 -5px; }
.cut { width: 46px; overflow: hidden; gap: 9px; margin-right: 0; }
.bar .cut { justify-content: flex-start; margin-right: 0; }
.mark { position: relative; width: 109px; height: 30px; margin: -3px 0; border: 2px solid #f02020; background: #ececec; padding-left: 16px; }

/* form sheet */
.sheet-area { flex: 1; min-height: 0; overflow: hidden; background: #f0f0f0; border: 1px solid #808080; border-width: 1px 0 0 1px; }
.sheet { table-layout: fixed; width: 748px; border-spacing: 0; line-height: 12px; }
.w5 { width: 5px; } .w6 { width: 6px; } .w16 { width: 16px; } .w21 { width: 21px; } .w22 { width: 22px; }
.w23 { width: 23px; } .w24 { width: 24px; } .w25 { width: 25px; } .w27 { width: 27px; } .w28 { width: 28px; }
.w29 { width: 29px; } .w30 { width: 30px; } .w32 { width: 32px; } .w33 { width: 33px; }
.sheet th, .sheet td { padding: 0; overflow: hidden; }
.sheet th { background: #f0f0f0; font: bold 14px/14px "Liberation Serif", serif; border-bottom: 1px solid #808080; }
.sheet thead th { height: 19px; font: 12px/14px "Liberation Serif", serif; border-right: 1px solid #999; }
.corner svg { width: 12px; height: 12px; margin: 6px 0 0 20px; }
.sheet td { background: #dfdfdf; text-align: center; border: 0 solid #000; border-width: 0 1px 1px 0; }
.sheet td.o { background: #f0c8a5; }
.sheet td.w { background: #fff; }
.sheet td.e { border-right-width: 2px; }
.sheet td.n { border-right: 0; font-size: 10px; color: #333; }
.sheet td.l { text-align: left; padding-left: 2px; }
.sheet td.p { border-color: #d0ccc4; }
.sheet td.g { border-right-color: #d0ccc4; }
.sheet td.soft { border-bottom-color: #d0ccc4; border-right-color: #000; }
.sheet td.date { color: #000060; }
.sheet td.thick { border-bottom-width: 2px; border-right: 0; }
.sheet td.a { border-width: 0 1px 0 2px; }
.sheet td.a.top { border-right-width: 2px; }
.sheet td.tail { border-color: #d0ccc4; }
.sheet td.title { font-size: 22px; line-height: 26px; padding-bottom: 4px; }
.sheet td.code { font-size: 16px; line-height: 16px; }
.logo { width: 75px; height: 74px; margin: 0 auto; }
.za { font: bold 19px "DejaVu Sans", sans-serif; fill: #444; }
.vert { width: 12px; margin: 0 auto; white-space: normal; word-break: break-all; }
.clip { overflow: hidden; }
.c4 { height: 4px; line-height: 4px; }
.c10 { height: 10px; line-height: 10px; }
.h5 { height: 5px; } .h11 { height: 11px; } .h25 { height: 25px; } .h36 { height: 36px; } .h37 { height: 37px; }
.h45 { height: 45px; } .h54 { height: 54px; } .h56 { height: 56px; } .h57 { height: 57px; } .h75 { height: 75px; }
```
